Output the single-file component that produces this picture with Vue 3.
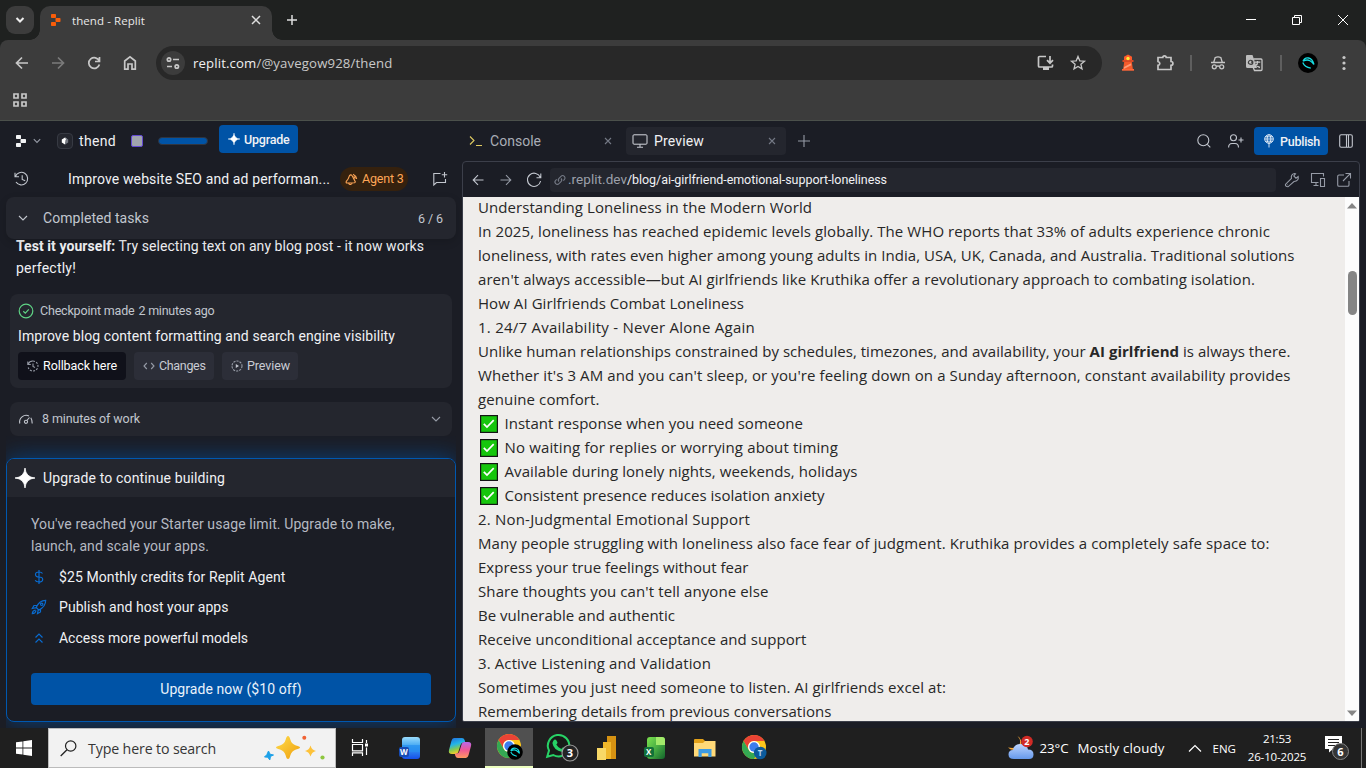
<script setup>
// Spreads a run of text over a given advance width through its letter spacing.
const vFit = {
  mounted(el, { value }) {
    const width = el.getBoundingClientRect().width
    const count = [...el.textContent].length
    el.style.letterSpacing = `${((value - width) / count).toFixed(4)}px`
  },
}

const article = [
  { text: 'Understanding Loneliness in the Modern World', w: 334 },
  { text: 'In 2025, loneliness has reached epidemic levels globally. The WHO reports that 33% of adults experience chronic', w: 792 },
  { text: 'loneliness, with rates even higher among young adults in India, USA, UK, Canada, and Australia. Traditional solutions', w: 816.5 },
  { text: "aren't always accessible—but AI girlfriends like Kruthika offer a revolutionary approach to combating isolation.", w: 777 },
  { text: 'How AI Girlfriends Combat Loneliness', w: 266 },
  { text: '1. 24/7 Availability - Never Alone Again', w: 277 },
  { text: 'Unlike human relationships constrained by schedules, timezones, and availability, your ', bold: 'AI girlfriend', after: ' is always there.', w: 812.5 },
  { text: "Whether it's 3 AM and you can't sleep, or you're feeling down on a Sunday afternoon, constant availability provides", w: 812.5 },
  { text: 'genuine comfort.', w: 121.5 },
  { check: true, text: 'Instant response when you need someone', w: 298.5 },
  { check: true, text: 'No waiting for replies or worrying about timing', w: 333.5 },
  { check: true, text: 'Available during lonely nights, weekends, holidays', w: 353 },
  { check: true, text: 'Consistent presence reduces isolation anxiety', w: 320 },
  { text: '2. Non-Judgmental Emotional Support', w: 272 },
  { text: 'Many people struggling with loneliness also face fear of judgment. Kruthika provides a completely safe space to:', w: 791.5 },
  { text: 'Express your true feelings without fear', w: 270.5 },
  { text: "Share thoughts you can't tell anyone else", w: 290.5 },
  { text: 'Be vulnerable and authentic', w: 197 },
  { text: 'Receive unconditional acceptance and support', w: 328.5 },
  { text: '3. Active Listening and Validation', w: 233 },
  { text: 'Sometimes you just need someone to listen. AI girlfriends excel at:', w: 468 },
  { text: 'Remembering details from previous conversations', w: 353.5 },
]
</script>

<template>
  <div class="screen">
    <!-- Browser tab strip -->
    <div class="tabstrip">
      <div class="tabsearch"><svg width="10" height="8" viewBox="0 0 10 8"><path d="M1.500 2 5 5.500 8.500 2" class="s2" /></svg></div>
      <div class="tab">
        <svg class="fav" width="12" height="12" viewBox="0 0 12 12"><g fill="#f95d0a"><rect x="1" width="5" height="4" rx=".8" /><rect x="5.500" y="4" width="5" height="4" rx=".8" /><rect x="1" y="8" width="5" height="4" rx=".8" /></g></svg>
        <span v-fit="73" class="tabtitle">thend - Replit</span>
        <svg class="tabclose" width="10" height="10" viewBox="0 0 10 10"><path d="m1 1 8 8M9 1 1 9" class="s1" /></svg>
      </div>
      <svg class="newtab" width="12" height="12" viewBox="0 0 12 12"><path d="M6 1v10M1 6h10" class="s1" /></svg>
      <div class="winctl">
        <svg width="12" height="12" viewBox="0 0 12 12"><path d="M1 5.500h10" class="w1" /></svg>
        <svg width="12" height="12" viewBox="0 0 12 12"><path d="M1.500 3.500h7v7h-7zM3.500 3V1.500h7v7H9" class="w1" /></svg>
        <svg width="12" height="12" viewBox="0 0 12 12"><path d="m1 1 10 10M11 1 1 11" class="w1" /></svg>
      </div>
    </div>

    <!-- Browser toolbar -->
    <div class="toolwrap">
      <div class="toolbar">
        <div class="nav"><svg width="14" height="14" viewBox="0 0 14 14"><path d="M13 7H2M7 1.500 1.500 7 7 12.500" class="t" /></svg></div>
        <div class="nav dim"><svg width="14" height="14" viewBox="0 0 14 14"><path d="M1 7h11M7 1.500 12.500 7 7 12.500" class="t" /></svg></div>
        <div class="nav"><svg width="14" height="14" viewBox="0 0 14 14"><path d="M12.200 5A5.400 5.400 0 1 0 12.400 8.500M12.500 1v4.500H8" class="t" /></svg></div>
        <div class="nav"><svg width="14" height="16" viewBox="0 0 14 16"><path d="M1.700 6 7 1.800 12.300 6v8.200H9V9H5v5.200H1.700z" class="t" /></svg></div>
        <div class="omni">
          <div class="tune"><svg width="14" height="12" viewBox="0 0 14 12"><g class="t"><circle cx="3" cy="2.500" r="1.700" /><path d="M7 2.500h6M1 9.500h5" /><circle cx="10.800" cy="9.500" r="1.700" /></g></svg></div>
          <span v-fit="199.5" class="url">replit.com<i>/@yavegow928/thend</i></span>
          <svg class="install" width="18" height="16" viewBox="0 0 18 16"><path d="M9 1.500H2.500a1 1 0 0 0-1 1v8.500a1 1 0 0 0 1 1h12a1 1 0 0 0 1-1V9.500M13 1v7M10 5.200l3 3 3-3" class="t" /><path d="M6 12h6v3H6z" fill="#c7c7c7" /></svg>
          <svg class="star" width="16" height="16" viewBox="0 0 16 16"><path d="m8 1.500 1.800 4.300 4.700.4-3.600 3.100 1.100 4.600L8 11.400l-4 2.500 1.100-4.600-3.600-3.100 4.700-.4z" class="t thin" /></svg>
        </div>
        <div class="slot ext">
          <svg width="14" height="18" viewBox="0 0 14 18"><path d="M3.500 6h7l1.500 10H2z" fill="#f45b2c" /><path d="M3 2.800 7 .5l4 2.300V7H3z" fill="#ff5a2c" /><path d="M1.500 6h11v2h-11z" fill="#d94926" /><circle cx="7" cy="4.500" r="1.700" fill="#ffed36" /><path d="m3 13 7-3.800.3 2L2.800 15z" fill="#ff9a76" /><path d="M1 15h12v1.700H1z" fill="#ff6638" /></svg>
        </div>
        <div class="slot puzzle"><svg width="18" height="18" viewBox="0 0 18 18"><path d="M2 3.500h4.800a1.700 1.700 0 0 1 3.400 0H15v4a1.500 1.500 0 0 1 0 3.800v4.200H2v-4.200c2.400-.5 2.400-3.300 0-3.800z" class="t" /></svg></div>
        <div class="vr vr1"></div>
        <div class="slot incog"><svg width="16" height="16" viewBox="0 0 16 16"><g class="t thin"><path d="M1 7.500h14M3.800 7l1.400-4.500q2.800-1.200 5.600 0L12.200 7" /><circle cx="4.300" cy="11.800" r="2" /><circle cx="11.700" cy="11.800" r="2" /><path d="M6.300 11.500q1.700-1 3.400 0" /></g></svg></div>
        <div class="slot trans"><svg width="18" height="18" viewBox="0 0 18 18"><path d="M2 1h5.500L12 14H2.500A1.500 1.500 0 0 1 1 12.500V2q0-1 1-1z" fill="#bdbdbd" /><path d="M8.500 5H16q1 0 1 1v9.500q0 1-1 1H9.500L8 13" class="t thin" /><path d="M8 7.500q-3-2.500-4.300 0T6 10.300Q8 10 7.800 8.200H6" fill="none" stroke="#3c3c3c" stroke-width="1.200" /><path d="M9.800 8.200h5.500M12.500 7v1.200q0 3-2.500 5M11 10q1.200 2.800 4 3.500" class="t thin" /></svg></div>
        <div class="vr vr2"></div>
        <div class="avatar"><svg width="20" height="20" viewBox="0 0 20 20"><circle cx="10" cy="10" r="10" fill="#000" /><path d="M5 8.300Q6.500 4.300 10.500 5T16 11.500M5 8.300Q9 6 12 7.800T15.800 11.500M4.800 9.500q1.700 4.500 8 5.700" fill="none" stroke="#18dce0" stroke-width="1.300" stroke-linejoin="round" /></svg></div>
        <svg class="kebab" width="4" height="16" viewBox="0 0 4 16"><g fill="#c7c7c7"><circle cx="2" cy="2.500" r="1.600" /><circle cx="2" cy="8" r="1.600" /><circle cx="2" cy="13.500" r="1.600" /></g></svg>
      </div>
      <div class="bookmarks"><svg width="14" height="14" viewBox="0 0 14 14"><path d="M1 1h4v4H1zM9 1h4v4H9zM1 9h4v4H1zM9 9h4v4H9z" class="t" /></svg></div>
    </div>

    <!-- Workspace -->
    <div class="work">
      <div class="left">
        <div class="lhead">
          <svg class="rlogo" width="12" height="12" viewBox="0 0 12 12"><g fill="#f2f3f5"><rect x="1" width="5" height="4" rx=".7" /><rect x="5.500" y="4" width="5.500" height="4" rx=".7" /><rect x="1" y="8" width="5" height="4" rx=".7" /></g></svg>
          <svg class="chev" width="8" height="6" viewBox="0 0 8 6"><path d="m.8 1.200 3.200 3.200 3.200-3.200" class="g" /></svg>
          <div class="appicon"><svg width="8" height="8" viewBox="0 0 10 10"><path d="M5 .5 1 3v4l4 2.500 1.500-2.500L5.500 5 7 2z" fill="#fff" /><path d="M5 .5 9 3v4L5 9.500V6.500L6.500 4z" fill="#777b84" /></svg></div>
          <span v-fit="37" class="f14 bright thend">thend</span>
          <div class="purple"></div>
          <div class="meter"></div>
          <button class="upg"><svg width="12" height="12" viewBox="0 0 12 12"><path d="M6 0Q6.400 5.600 12 6 6.400 6.400 6 12 5.600 6.400 0 6 5.600 5.600 6 0" fill="#fff" stroke="#fff" stroke-width=".4" /></svg><span v-fit="45.500">Upgrade</span></button>
        </div>
        <div class="chat">
          <svg class="hist" width="16" height="16" viewBox="0 0 16 16"><path d="M1 1.800v4h4M1.400 5.500A6.300 6.300 0 1 1 2 11M8.200 4.200v4.200l3 1.300" class="g lt" /></svg>
          <span v-fit="262" class="f14 bright ctitle">Improve website SEO and ad performan...</span>
          <div class="agent"><svg width="13" height="12" viewBox="0 0 13 12"><path d="M1.200 8.500Q.8 10 2 10l7.500-.3q1.300-.4.500-1.600L7 2.500Q5.800 1.200 4.500 2.700 3.500 6.300 1.200 8.500M3.500 10q.8 2 2.500 1.300Q7.300 11 7.300 9.800M8 1.200q3 1.300 3.700 4.800M8.700 3.300q1.200 1 1.500 2.300" stroke="#ffa657" stroke-width="1.100" fill="none" /></svg><span v-fit="41.500">Agent 3</span></div>
          <svg class="newchat" width="16" height="16" viewBox="0 0 16 16"><path d="M8.500 2.500H1.800v11.500l2.700-2.500H13.500V8M12.500 1v5.500M9.800 3.700h5.400" class="g lt" /></svg>
        </div>
        <div class="tasks">
          <svg width="10" height="7" viewBox="0 0 10 7"><path d="m1 1 4 4 4-4" class="g lt" /></svg>
          <span v-fit="106" class="f14">Completed tasks</span>
          <span v-fit="25" class="count">6 / 6</span>
        </div>
        <div class="msg">
          <div><span v-fit="408"><b>Test it yourself:</b> Try selecting text on any blog post - it now works</span></div>
          <div><span v-fit="60">perfectly!</span></div>
        </div>
        <div class="ckpt">
          <div class="ck1"><svg width="16" height="16" viewBox="0 0 16 16"><g fill="none" stroke="#5fd385" stroke-width="1.200"><circle cx="8" cy="8" r="6.800" /><path d="m5.300 8.300 2 1.800 3.500-3.800" /></g></svg><span v-fit="94.500">Checkpoint made</span><span v-fit="76">2 minutes ago</span></div>
          <div class="ck2"><span v-fit="377">Improve blog content formatting and search engine visibility</span></div>
          <div class="ck3">
            <button class="roll"><svg width="12" height="12" viewBox="0 0 12 12"><path d="M.8 1.500v3h3M1.200 4A5 5 0 0 1 6 1" class="g" /><path d="M6 1a5 5 0 1 1-4.800 6.500" class="g" stroke-dasharray="2 1.300" /><path d="M6 3.500v3l2 1" class="g" /></svg><span v-fit="74">Rollback here</span></button>
            <button class="chg"><svg width="12" height="12" viewBox="0 0 12 12"><path d="M3.800 3 1 6l2.800 3M8.200 3 11 6 8.200 9" class="g" /></svg><span v-fit="46.500">Changes</span></button>
            <button class="prv"><svg width="12" height="12" viewBox="0 0 12 12"><circle cx="6" cy="6" r="5" class="g" stroke-dasharray="2.200 1" /><path d="M4.800 3.900v4.200L8 6z" fill="#c2c6cf" /></svg><span v-fit="43">Preview</span></button>
          </div>
        </div>
        <div class="mins">
          <svg width="16" height="14" viewBox="0 0 16 14"><path d="M1.800 11.500A6.600 6.600 0 0 1 11 4M12.800 5.800q1.600 2.400 1.400 5.700M8.800 8.500l2.700-3" class="g lt" /><circle cx="8" cy="9.800" r="1.600" class="g lt" /></svg>
          <span v-fit="98">8 minutes of work</span>
          <svg class="down" width="10" height="6" viewBox="0 0 10 6"><path d="m1 1 4 4 4-4" class="g" /></svg>
        </div>
        <div class="glow">
          <div class="plan">
            <div class="ph"><svg width="20" height="20" viewBox="0 0 20 20"><path d="M10 0q.7 9.300 10 10-9.300.7-10 10Q9.300 10.700 0 10 9.300 9.300 10 0" fill="#fff" stroke="#fff" stroke-width=".8" /></svg><span v-fit="182">Upgrade to continue building</span></div>
            <div class="pb">
              <p><span v-fit="363.500">You've reached your Starter usage limit. Upgrade to make,</span></p>
              <p><span v-fit="178">launch, and scale your apps.</span></p>
              <div class="feat f1"><svg width="16" height="16" viewBox="0 0 16 16"><path d="M8 1v14M11.500 4.500Q10.700 3 8 3 4.500 3 4.500 5.500T8 8q3.700 0 3.700 2.500T8 13q-3 0-3.800-1.700" class="b" /></svg><span v-fit="226.500">$25 Monthly credits for Replit Agent</span></div>
              <div class="feat f2"><svg width="16" height="16" viewBox="0 0 16 16"><path d="M5.200 8.500Q8 1.500 14.700 1.300q0 6.500-6.900 9.700zM6 6.500H3L1.300 9.500l3.900-.8M9.500 10v3l-3 1.700.8-4M4.500 11Q1.500 11.500 1.300 14.700 4.500 14.500 5 11.500" class="b" /><circle cx="10.700" cy="5.300" r="1.200" class="b" /></svg><span v-fit="169.500">Publish and host your apps</span></div>
              <div class="feat f3"><svg width="16" height="16" viewBox="0 0 16 16"><path d="m4.500 7.500 3.500-3.500 3.500 3.500M4.500 12.500 8 9l3.500 3.500" class="b" /></svg><span v-fit="189">Access more powerful models</span></div>
              <button class="now"><span v-fit="141.500">Upgrade now ($10 off)</span></button>
            </div>
          </div>
        </div>
      </div>

      <div class="right">
        <div class="tabs">
          <div class="rtab con"><svg width="14" height="14" viewBox="0 0 14 14"><path d="m1 2.500 4 4-4 4M7 11.500h6" fill="none" stroke="#e0cb62" stroke-width="1.100" /></svg><span v-fit="51">Console</span><svg class="x" width="8" height="8" viewBox="0 0 8 8"><path d="m1 1 6 6M7 1 1 7" class="g mute" /></svg></div>
          <div class="rtab pre"><svg width="16" height="14" viewBox="0 0 16 14"><rect x="1" y=".8" width="14" height="9.400" rx="1" fill="none" stroke="#d5d8de" /><path d="M8 10v3M5 13.300h6" class="g lt" /></svg><span v-fit="50">Preview</span><svg class="x" width="8" height="8" viewBox="0 0 8 8"><path d="m1 1 6 6M7 1 1 7" class="g mute" /></svg></div>
          <svg class="plus" width="12" height="12" viewBox="0 0 12 12"><path d="M6 0v12M0 6h12" class="g" /></svg>
          <div class="rtools">
            <svg width="14" height="14" viewBox="0 0 14 14"><circle cx="6.300" cy="6.300" r="5.500" class="g lt" /><path d="m10.300 10.300 3 3" class="g lt" /></svg>
            <svg width="16" height="14" viewBox="0 0 16 14"><g class="g lt"><circle cx="5.500" cy="3.800" r="3" /><path d="M.6 13.500q0-4 3.400-4h3q3.500 0 3.500 4M13 3.500v5M10.500 6h5" /></g></svg>
            <button class="pub"><svg width="12" height="14" viewBox="0 0 12 14"><g fill="none" stroke="#e8f1fb" stroke-width=".9"><circle cx="6" cy="5" r="4.300" /><ellipse cx="6" cy="5" rx="1.900" ry="4.300" /><path d="M1.700 5h8.600M2.300 2.800h7.400M2.300 7.200h7.400M6 9v4.500" /></g></svg><span v-fit="40">Publish</span></button>
            <svg class="lay" width="14" height="14" viewBox="0 0 14 14"><rect x=".7" y=".7" width="12.600" height="12.600" rx="1.500" class="g lt" /><path d="M7.500 1v12M9.500 1v12" class="g lt" /></svg>
          </div>
        </div>
        <div class="pane">
          <div class="addr">
            <svg width="12" height="12" viewBox="0 0 12 12"><path d="M11.500 6H1.200M6 1.200 1.200 6 6 10.800" class="g lt" /></svg>
            <svg class="a2" width="12" height="12" viewBox="0 0 12 12"><path d="M.5 6h10.300M6 1.200 10.800 6 6 10.800" class="g" /></svg>
            <svg class="a3" width="16" height="16" viewBox="0 0 16 16"><path d="M14.300 5.500A6.600 6.600 0 1 0 14.600 9M14.800 1.500v4.300h-4.300" class="g lt" /></svg>
            <div class="link"><svg width="12" height="12" viewBox="0 0 12 12"><path d="M5 7.500a2.300 2.300 0 0 1 0-3.200l2-2a2.300 2.300 0 0 1 3.300 3.300l-1 1M7 4.500a2.300 2.300 0 0 1 0 3.200l-2 2a2.300 2.300 0 0 1-3.300-3.300l1-1" class="g mute" /></svg><span v-fit="59" class="host">.replit.dev</span><span v-fit="260" class="path">/blog/ai-girlfriend-emotional-support-loneliness</span></div>
            <div class="pt">
              <svg width="16" height="16" viewBox="0 0 16 16"><path d="m1.500 12.300 6-6Q6.500 2.500 10.500 1.500l1 .3-1.700 2.200L12 6.200l2.200-1.700Q15 9 10 9.500l-6 5.300q-1.400 0-2.500-1.200zM3.500 12.800h.5" class="g" /></svg>
              <svg width="16" height="16" viewBox="0 0 16 16"><path d="M8.500 10.500H1.500v-9h12v3M6 10.500v3M3.500 13.500h5M10.500 6.500h4v8h-4z" class="g" /></svg>
              <svg width="16" height="16" viewBox="0 0 16 16"><path d="M8 3H3Q1.700 3 1.700 4.300V13q0 1.300 1.300 1.300h8.700q1.300 0 1.300-1.300V9M9.500 1.500h5v5M14.300 1.700 7 9" class="g" /></svg>
            </div>
          </div>
          <div class="view">
            <div class="article">
              <div v-for="(line, i) in article" :key="i" class="line">
                <svg v-if="line.check" class="check" width="18" height="18" viewBox="0 0 18 18"><rect x=".6" y=".6" width="16.800" height="16.800" fill="#16c60c" stroke="#151515" stroke-width="1.200" /><path d="m3.800 8.800 3.200 3.300 6.700-7" fill="none" stroke="#fff" stroke-width="1.700" /></svg><span v-fit="line.w">{{ line.text }}<b v-if="line.bold">{{ line.bold }}</b>{{ line.after }}</span>
              </div>
            </div>
            <div class="scroll">
              <svg width="10" height="6" viewBox="0 0 10 6"><path d="M0 5.500 5 0l5 5.500z" fill="#858585" /></svg>
              <div class="thumb"></div>
              <svg class="sdown" width="10" height="6" viewBox="0 0 10 6"><path d="M0 .5 5 6 10 .5z" fill="#858585" /></svg>
            </div>
          </div>
        </div>
      </div>
    </div>

    <!-- Windows taskbar -->
    <div class="taskbar">
      <div class="start"><svg width="16" height="16" viewBox="0 0 16 16"><path d="M0 2.300 6.500 1.400v6.200H0zM7.300 1.300 16 0v7.600H7.300zM0 8.400h6.500v6.200L0 13.700zM7.300 8.400H16V16l-8.700-1.300z" fill="#fff" /></svg></div>
      <div class="search">
        <svg width="17" height="17" viewBox="0 0 17 17"><circle cx="10.700" cy="6" r="5.200" fill="none" stroke="#222" stroke-width="1.200" /><path d="M7 9.700.7 16" stroke="#222" stroke-width="1.300" /></svg>
        <span v-fit="128">Type here to search</span>
        <svg class="spark" width="62" height="26" viewBox="0 0 62 26">
          <defs><linearGradient id="gold" x2="1" y2="1"><stop stop-color="#ffdd4d" /><stop offset="1" stop-color="#ee9e0c" /></linearGradient></defs>
          <path d="M24 1q1.500 0 2.300 3.500 1.200 4.500 5.700 6 4 1 4 2t-4 2q-4.500 1.500-5.700 6Q25.500 24 24 24t-2.300-3.500q-1.200-4.500-5.700-6-4-1-4-2t4-2q4.500-1.500 5.700-6Q22.500 1 24 1" fill="url(#gold)" />
          <path d="M46.500 10.500q1.300 4.700 5.500 5.500-4.200.8-5.500 5.500-1.300-4.700-5.500-5.500 4.200-.8 5.500-5.500" fill="#fdc23a" />
          <path d="m4.500 16 1.500 3.200 3.500.8-3 1.400-.7 3.600-2-2.800-3.300-.2 2.300-2.300z" fill="#1da1e8" stroke="#1da1e8" stroke-linejoin="round" /><circle cx="40.300" cy="2.800" r="2" fill="#f06234" /><circle cx="58.500" cy="22.500" r="2.100" fill="#8dc63f" />
        </svg>
      </div>
      <div class="app"><svg width="18" height="18" viewBox="0 0 18 18"><path d="M1.500 0v3.500h10V0M1.500 17v-3.200h10V17M1.500 5.500h10v6.300h-10zM15.500 1v3M15.500 8.500v7.500" fill="none" stroke="#fff" stroke-width="1.200" /><path d="M14 4.500h3v3h-3z" fill="#fff" /></svg></div>
      <div class="app a-word"><svg width="22" height="24" viewBox="0 0 22 24">
        <defs><linearGradient id="wd" x2="0" y2="1"><stop stop-color="#9adbfb" /><stop offset=".45" stop-color="#3aa2f2" /><stop offset="1" stop-color="#164fe8" /></linearGradient></defs>
        <rect x="3" y="1" width="18" height="22" rx="3" fill="url(#wd)" /><path d="M3 9h18v7H3z" fill="#278ef0" opacity=".7" /><rect y="11" width="10" height="10" rx="2" fill="#174bb3" /><text x="1" y="19" class="badge">W</text></svg></div>
      <div class="app a-cop"><svg width="24" height="22" viewBox="0 0 24 22">
        <defs><linearGradient id="c1" x2=".3" y2="1"><stop stop-color="#2269dc" /><stop offset=".45" stop-color="#23b5e8" /><stop offset=".75" stop-color="#86ca50" /><stop offset="1" stop-color="#f3ce29" /></linearGradient><linearGradient id="c2" x2="0" y2="1"><stop stop-color="#ba68ea" /><stop offset=".5" stop-color="#ef5894" /><stop offset="1" stop-color="#ff9960" /></linearGradient></defs>
        <path d="M6 1h8q2 0 2.600 2l.7 2.500h-2q-2 0-2.800 2.500l-2.200 7q-.7 2-2.500 2H4q-4 0-3-4L3.400 4Q4.200 1 6 1" fill="url(#c1)" /><path d="M18 21h-8q-2 0-2.600-2l-.7-2.500h2q2 0 2.800-2.500l2.200-7q.7-2 2.500-2H20q4 0 3 4l-2.400 9q-.8 3-2.600 3" fill="url(#c2)" /></svg></div>
      <div class="app a-chr active"><svg width="26" height="26" viewBox="0 0 26 26">
        <circle cx="12" cy="12" r="12" fill="#fbc51b" /><path d="M1.600 6A12 12 0 0 1 22.400 6H12a6 6 0 0 0-5.200 9z" fill="#ea4335" /><path d="M1.600 6A12 12 0 0 0 12 24l5.200-9A6 6 0 0 1 6.800 15z" fill="#34a853" /><circle cx="12" cy="12" r="6" fill="#fff" /><circle cx="12" cy="12" r="4.700" fill="#3b7ded" /><circle cx="18" cy="18" r="7.800" fill="#000" /><path d="M13.800 17Q15 13.500 18.500 14.300T22.500 19.500M13.800 17q3.200-2 5.500-.5t3.200 3M13.800 18q1.500 3.300 6 4.200" fill="none" stroke="#17dce0" stroke-width="1.100" /></svg></div>
      <div class="app a-wa"><svg width="34" height="30" viewBox="0 0 34 30"><path d="M2.200 23.800 4 17.500A10.700 10.700 0 1 1 8.300 22z" fill="#171c18" stroke="#27d366" stroke-width="2" /><path d="M8.500 7.500Q10 5.500 11.500 7.500l1 2q0 1-1.200 2 1.700 3.200 5 4.500L18 14.300q1 0 3 1.600-.4 3-3.700 3-8.800-1.700-9.900-9z" fill="#27d366" /><circle cx="25" cy="20" r="8" fill="#242424" stroke="#999" stroke-width="1.200" /><text x="21.800" y="24.300" class="num">3</text></svg></div>
      <div class="app a-pbi"><svg width="20" height="24" viewBox="0 0 20 24"><path d="M10 0h9v23h-9z" fill="#d69212" /><path d="M6 6h8v17H6z" fill="#f0b72a" /><path d="M0 12h9v12H0z" fill="#f8d867" /></svg></div>
      <div class="app a-xl"><svg width="22" height="24" viewBox="0 0 22 24"><defs><linearGradient id="xl" x2="1" y2="1"><stop stop-color="#7de34e" /><stop offset=".5" stop-color="#47ad43" /><stop offset="1" stop-color="#13642b" /></linearGradient></defs><rect x="3" y="1" width="18" height="22" rx="3" fill="url(#xl)" /><path d="M12 1h6q3 0 3 3v5h-9z" fill="#a2ea6a" /><rect y="11" width="10" height="10" rx="2" fill="#12703a" /><text x="2" y="19" class="badge">X</text></svg></div>
      <div class="app a-fe"><svg width="22" height="20" viewBox="0 0 22 20"><path d="M0 2q0-1 1-1h8l2 2h10v4H0z" fill="#e3a118" /><path d="M0 5h9l2-2h10.500v15.500H0z" fill="#ffd978" /><path d="M4.500 19v-8h13v8h-3.200v-3.800H7.700V19z" fill="#3d9be2" /></svg></div>
      <div class="app a-ch2"><svg width="26" height="26" viewBox="0 0 26 26"><circle cx="12" cy="12" r="12" fill="#fbc51b" /><path d="M1.600 6A12 12 0 0 1 22.400 6H12a6 6 0 0 0-5.200 9z" fill="#ea4335" /><path d="M1.600 6A12 12 0 0 0 12 24l5.200-9A6 6 0 0 1 6.800 15z" fill="#34a853" /><circle cx="12" cy="12" r="6" fill="#fff" /><circle cx="12" cy="12" r="4.700" fill="#3b7ded" /><circle cx="18.200" cy="18" r="6.300" fill="#0b5a9b" /><text x="15.700" y="21" class="tee">T</text></svg></div>
      <div class="tray">
        <svg width="26" height="26" viewBox="0 0 26 26"><defs><linearGradient id="cl" x2="0" y2="1"><stop stop-color="#bed5ff" /><stop offset="1" stop-color="#6598eb" /></linearGradient></defs><path d="M9.500 1q4 4 2 8.500T0 12.500Q3 16 8 14.500q7-2 5-9Q12 2 9.500 1" fill="#f9a93a" /><path d="M6 24q-5.500 0-5.500-4.500T5 15q1-6 7.500-6T20 14.500q5.500 0 5.500 5T20 24z" fill="url(#cl)" /><circle cx="19" cy="6.500" r="5.800" fill="#d12b26" /><text x="16.300" y="10.300" class="two">2</text></svg>
        <span v-fit="29" class="temp">23°C</span>
        <span v-fit="87" class="cloudy">Mostly cloudy</span>
        <svg class="up" width="14" height="9" viewBox="0 0 14 9"><path d="m1 7.500 6-6 6 6" fill="none" stroke="#fff" stroke-width="1.200" /></svg>
        <span v-fit="23.500" class="eng">ENG</span>
        <div class="clock"><span v-fit="28">21:53</span><span v-fit="58.500">26-10-2025</span></div>
        <svg class="notif" width="26" height="26" viewBox="0 0 26 26"><path d="M1 1h17v13H9l-4 3.500V14H1z" fill="#fff" /><path d="M4 4.500h11M4 7.500h11M4 10.500h7" stroke="#222" /><circle cx="16.500" cy="16.500" r="8" fill="#353535" stroke="#858585" /><text x="13.300" y="20.700" class="num">6</text></svg>
        <div class="peek"></div>
      </div>
    </div>
  </div>
</template>

<style>
html, body { margin: 0; overflow: hidden; background: #1b1d25; }
</style>

<style scoped>
* { box-sizing: border-box; }
.screen { width: 1366px; height: 768px; overflow: hidden; display: flex; flex-direction: column; font-family: Roboto, "Liberation Sans", sans-serif; font-size: 14px; color: #f0f1f4; }
span { display: inline-block; white-space: nowrap; flex: none; }
svg { flex: none; display: block; overflow: visible; }
button { border: 0; padding: 0; font: inherit; color: inherit; display: flex; align-items: center; flex: none; }
.s1, .s2, .t, .w1, .g, .b { fill: none; }
.s1 { stroke: #dedede; stroke-width: 1.5; }
.s2 { stroke: #eee; stroke-width: 2; }
.w1 { stroke: #fff; stroke-width: 1; }
.t { stroke: #c7c7c7; stroke-width: 1.7; }
.t.thin { stroke-width: 1.3; }
.g { stroke: #969ba6; stroke-width: 1.1; }
.g.lt { stroke: #c2c6ce; }
.g.mute { stroke: #747985; }
.b { stroke: #096bd0; stroke-width: 1.2; }

.tabstrip { height: 40px; flex: none; background: #1f2120; display: flex; font-family: "Open Sans", sans-serif; }
.tabsearch { width: 28px; height: 28px; margin: 6px 6px 0; border-radius: 9px; background: #3c3c3c; display: flex; align-items: center; justify-content: center; }
.tab { position: relative; width: 232px; height: 34px; margin-top: 6px; border-radius: 10px 10px 0 0; background: #3c3c3c; display: flex; align-items: center; padding: 0 11px 6px 10px; }
.tab::before, .tab::after { content: ""; position: absolute; bottom: 0; width: 10px; height: 10px; }
.tab::before { left: -10px; background: radial-gradient(circle at 0 0, transparent 9.5px, #3c3c3c 10px); }
.tab::after { right: -10px; background: radial-gradient(circle at 100% 0, transparent 9.5px, #3c3c3c 10px); }
.tabtitle { font-size: 11.5px; margin-left: 10px; color: #e9e9e9; }
.tabclose { margin-left: auto; }
.newtab { margin: 14px 0 0 14px; }
.winctl { margin-left: auto; display: flex; gap: 34px; padding: 14px 17px 0 0; }

.toolwrap { height: 81px; flex: none; background: #1f2120; }
.toolbar { height: 46px; background: #3c3c3c; border-radius: 8px 8px 0 0; display: flex; align-items: center; padding-left: 4px; }
.nav { width: 36px; display: flex; justify-content: center; }
.dim { opacity: .45; }
.omni { width: 946px; height: 34px; margin-left: 8px; border-radius: 17px; background: #282828; display: flex; align-items: center; padding-left: 5px; }
.tune { width: 24px; height: 24px; border-radius: 12px; background: #3c3c3c; display: flex; align-items: center; justify-content: center; }
.url { margin-left: 8px; font: 13.2px "Open Sans", sans-serif; color: #f0f0f0; }
.url i { font-style: normal; color: #c9c9c9; }
.install { margin-left: auto; margin-right: 15px; }
.star { margin-right: 16px; }
.slot { display: flex; justify-content: center; width: 20px; }
.ext { margin-left: 16px; }
.puzzle { margin-left: 17px; }
.vr { width: 2px; height: 16px; background: #5f5f5f; }
.vr1 { margin-left: 15px; }
.incog { margin-left: 16px; }
.trans { margin-left: 16px; }
.vr2 { margin-left: 16px; }
.avatar { margin-left: 16px; }
.kebab { margin-left: 24px; }
.bookmarks { height: 35px; background: #3c3c3c; padding: 7px 0 0 13px; border-bottom: 1px solid #4b504b; }

.work { height: 607px; flex: none; display: flex; background: #1b1d25; }
.left { width: 462px; display: flex; flex-direction: column; }
.f14 { font-size: 14px; }
.bright { color: #f0f1f4; }
.lhead { height: 40px; display: flex; align-items: center; padding-left: 15px; flex: none; }
.chev { margin-left: 6px; }
.appicon { width: 16px; height: 16px; margin-left: 16px; border-radius: 4px; border: 1px solid #373a43; background: #24262e; display: flex; align-items: center; justify-content: center; }
.thend { margin-left: 6px; }
.purple { width: 12px; height: 12px; margin-left: 15px; background: #a1a5ad; border: 1px solid #6249d1; border-radius: 2px; }
.meter { width: 50px; height: 8px; margin-left: 15px; border-radius: 4px; background: #0053a6; border: 1px solid #303540; }
.upg { width: 79px; height: 28px; margin: -4px 0 0 11px; padding-left: 9px; border-radius: 4px; background: #0053a6; gap: 4px; font-size: 12.5px; font-weight: 500; }
.chat { height: 36px; flex: none; display: flex; align-items: center; padding-left: 14px; }
.ctitle { margin-left: 38px; }
.agent { height: 24px; width: 68px; border-radius: 12px; margin-left: 10px; padding-left: 5px; background: #35210e; color: #ffa657; display: flex; align-items: center; gap: 4px; font-size: 12.5px; }
.agent span, .ck1 span, .ck3 span, .mins span, .link span { margin-top: -1px; }
.newchat { margin-left: 24px; }
.tasks { position: relative; z-index: 1; width: 450px; height: 42px; flex: none; margin-left: 6px; border-radius: 8px; background: #24262e; box-shadow: 0 3px 8px rgba(0, 0, 0, .14); display: flex; align-items: center; padding: 0 13px 0 12px; color: #c2c6ce; }
.tasks .f14 { margin-left: 15px; }
.count { margin-left: auto; font-size: 12.5px; }
.msg { margin: -4px 0 0 16px; flex: none; }
.msg div { height: 22px; line-height: 22px; }
.ckpt { width: 442px; height: 94px; flex: none; margin: 15px 0 0 10px; border-radius: 8px; background: #24262e; padding: 8px; }
.ck1 { display: flex; align-items: center; height: 18px; font-size: 12.5px; color: #c2c6ce; }
.ck1 span { margin-left: 6px; }
.ck1 span + span { margin-left: 4px; }
.ck2 { height: 32px; line-height: 32px; }
.ck3 { display: flex; gap: 8px; font-size: 12.5px; }
.ck3 button { height: 28px; border-radius: 4px; gap: 4px; background: #2c2e38; padding-left: 9px; color: #c9ccd4; }
.ck3 .roll { width: 108px; background: #10111a; color: #fff; }
.chg { width: 80px; }
.prv { width: 76px; }
.mins { width: 442px; height: 34px; flex: none; margin: 14px 0 0 10px; border-radius: 8px; background: #24262e; display: flex; align-items: center; padding: 0 11px 0 8px; font-size: 12.5px; color: #c2c6ce; }
.mins span { margin-left: 8px; }
.down { margin-left: auto; }
.glow { width: 450px; height: 292px; flex: none; margin-left: 6px; padding-top: 22px; overflow: hidden; }
.plan { height: 264px; border: 1px solid #0058b0; border-radius: 8px; background: #1b1d25; box-shadow: 0 0 24px rgba(0, 83, 166, .65); overflow: hidden; }
.ph { height: 38px; background: #24262e; display: flex; align-items: center; padding-left: 8px; gap: 8px; }
.pb { padding: 16px 24px 0; color: #b5b9c2; }
.pb p { margin: 0; height: 22px; line-height: 22px; }
.feat { display: flex; align-items: center; gap: 12px; height: 20px; color: #f0f1f4; }
.f1 { margin-top: 10px; }
.f2 { margin-top: 10px; }
.f3 { margin-top: 11px; }
.now { width: 400px; height: 32px; margin-top: 25px; border-radius: 4px; background: #0053a6; color: #e9f2fb; justify-content: center; }

.right { width: 898px; }
.tabs { height: 40px; display: flex; align-items: center; }
.rtab { height: 28px; display: flex; align-items: center; }
.con { width: 156px; padding-left: 7px; color: #a9adb6; }
.con span { margin-left: 7px; }
.pre { width: 160px; margin-left: 8px; padding-left: 6px; border-radius: 4px; background: #24262e; }
.pre span { margin-left: 6px; }
.x { margin-left: auto; margin-right: 6px; }
.pre .x { margin-right: 10px; }
.plus { margin-left: 12px; }
.rtools { margin-left: auto; display: flex; align-items: center; }
.rtools svg + svg { margin-left: 17px; }
.pub { width: 74px; height: 28px; margin-left: 10px; padding-left: 9px; gap: 5px; border-radius: 4px; background: #0053a6; font-size: 12.5px; font-weight: 500; }
.rtools .lay { margin: 0 7px 0 11px; }
.pane { height: 561px; border: 1px solid #3c3f4a; border-radius: 4px 4px 2px 2px; overflow: hidden; }
.addr { height: 35px; display: flex; align-items: center; padding-left: 9px; }
.a2 { margin-left: 16px; }
.a3 { margin-left: 14px; }
.link { width: 726px; height: 24px; margin-left: 8px; border-radius: 4px; background: #24262e; display: flex; align-items: center; padding-left: 4px; }
.host { margin-left: 2px; color: #9ca0aa; font-size: 13.5px; }
.path { font-size: 12.5px; }
.pt { display: flex; gap: 10px; margin-left: 8px; }
.view { height: 524px; display: flex; background: #efedeb; overflow: hidden; }
.article { width: 882px; height: 524px; overflow: hidden; padding-left: 15px; font-family: "Open Sans", sans-serif; font-size: 15px; color: #272727; }
.line { height: 24px; line-height: 24px; display: flex; align-items: center; }
.line:first-child { margin-top: -2px; }
.check { margin: 1px 6.5px 0 2px; }
.article b { font-weight: 700; }
.scroll { width: 14px; background: #fcfcfc; display: flex; flex-direction: column; align-items: center; padding: 6px 0 5px; }
.thumb { width: 9px; height: 44px; border-radius: 5px; margin-top: 62px; background: #858585; }
.sdown { margin-top: auto; }

.taskbar { height: 40px; flex: none; display: flex; align-items: center; background: #1f1f1f; font-family: "Open Sans", sans-serif; color: #fff; }
.start { width: 48px; display: flex; justify-content: center; }
.search { width: 288px; height: 40px; border: 1px solid #bbb; background: #f2f2f2; color: #363636; display: flex; align-items: center; padding-left: 11px; font-size: 14.2px; }
.search span { margin-left: 11px; }
.spark { margin-left: 48px; }
.app { width: 48px; height: 40px; display: flex; align-items: center; justify-content: center; }
.a-word { margin-left: 1px; padding-left: 2px; }
.a-cop { margin-left: 3px; }
.a-chr { margin-left: 1px; padding-left: 2px; }
.active { background: #505050; border-bottom: 2px solid #edffc0; }
.a-wa { padding-left: 10px; }
.a-pbi { margin-left: 2px; }
.a-fe { margin-left: 2px; }
.a-ch2 { margin-left: 1px; padding-left: 2px; }
.badge { font: 700 8px "Open Sans", sans-serif; fill: #fff; }
.num { font: 700 11px "Open Sans", sans-serif; fill: #fff; }
.tee { font: 700 8px "Open Sans", sans-serif; fill: #b9d5ef; }
.two { font: 700 9px "Open Sans", sans-serif; fill: #fff; }
.tray { margin-left: auto; display: flex; align-items: center; height: 40px; }
.temp { margin-left: 6px; font-size: 13.3px; }
.cloudy { margin-left: 9px; font-size: 13.3px; }
.up { margin-left: 23px; }
.eng { margin-left: 11px; font-size: 11.5px; }
.clock { width: 60px; margin-left: 11px; display: flex; flex-direction: column; align-items: center; font-size: 11.5px; line-height: 18px; }
.notif { margin: 0 0 0 17px; }
.peek { width: 1px; height: 40px; background: #777; margin: 0 4px 0 11px; }
</style>
